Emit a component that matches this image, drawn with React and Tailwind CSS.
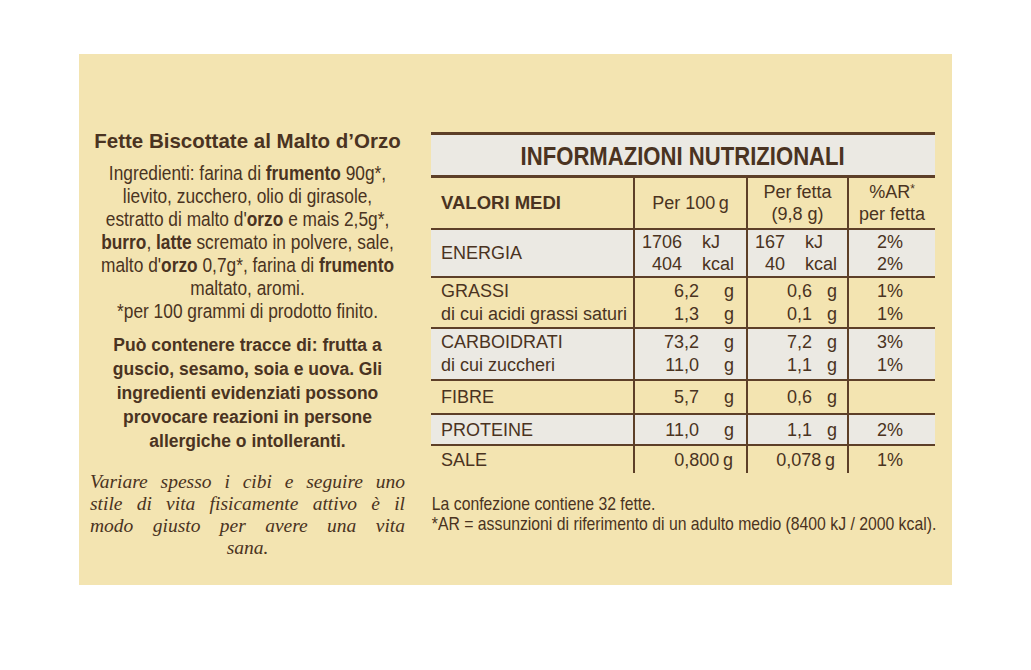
import React from "react";

const SANS = "[font-family:'Liberation_Sans',Arial,sans-serif]";
const SERIF = "[font-family:'Liberation_Serif',serif]";
const ROW = "grid grid-cols-[202px_113px_101px_88px]";
const VL = "border-l-2 border-[#5d3f28]";

function HLine({ thick }) {
  return <div className={(thick ? "h-[3px]" : "h-[2px]") + " bg-[#5d3f28]"} />;
}

function Pair({ rows, nw, uml, uw, right }) {
  return (
    <div className="flex flex-col">
      {rows.map((r, i) => (
        <div key={i} className="flex">
          <span className={"text-right " + nw}>{r[0]}</span>
          <span className={(right ? "text-right " : "") + uml + " " + uw}>{r[1]}</span>
        </div>
      ))}
    </div>
  );
}

function GCol2({ vals }) {
  return (
    <div className={VL + " flex items-center"}>
      <Pair rows={vals.map((v) => [v, "g"])} nw="w-[64px]" uml="" uw="w-[35px]" right />
    </div>
  );
}
function GCol3({ vals }) {
  return (
    <div className={VL + " flex items-center"}>
      <Pair rows={vals.map((v) => [v, "g"])} nw="w-[64px]" uml="" uw="w-[25px]" right />
    </div>
  );
}
function Pct({ vals }) {
  return (
    <div className={VL + " flex flex-col justify-center items-center pr-[4px]"}>
      {vals.map((v, i) => (
        <div key={i}>{v}</div>
      ))}
    </div>
  );
}

export default function App() {
  return (
    <div className={"w-[1031px] h-[670px] bg-white pl-[79px] pt-[54px] overflow-hidden " + SANS}>
      <div className="w-[873px] h-[531px] bg-[#f3e4b1] flex items-start text-[#4a3321]">
        {/* Left column */}
        <div className="ml-[11px] mt-[75px] w-[315px] text-center">
          <div className="font-bold text-[20.5px] leading-[24px] whitespace-nowrap">
            Fette Biscottate al Malto d’Orzo
          </div>
          <div className="mt-[7.5px] -mx-[45px] w-[405px] text-[20.5px] leading-[23px] whitespace-nowrap scale-x-[0.845]">
            <div>Ingredienti: farina di <b>frumento</b> 90g*,</div>
            <div>lievito, zucchero, olio di girasole,</div>
            <div>estratto di malto d'<b>orzo</b> e mais 2,5g*,</div>
            <div><b>burro</b>, <b>latte</b> scremato in polvere, sale,</div>
            <div>malto d'<b>orzo</b> 0,7g*, farina di <b>frumento</b></div>
            <div>maltato, aromi.</div>
            <div>*per 100 grammi di prodotto finito.</div>
          </div>
          <div className="mt-[11.5px] font-bold text-[17.5px] leading-[24px] whitespace-nowrap">
            <div>Può contenere tracce di: frutta a</div>
            <div>guscio, sesamo, soia e uova. Gli</div>
            <div>ingredienti evidenziati possono</div>
            <div>provocare reazioni in persone</div>
            <div>allergiche o intolleranti.</div>
          </div>
          <div className={"mt-[18px] italic text-[19.5px] leading-[22px] " + SERIF}>
            <div className="text-justify [text-align-last:justify]">Variare spesso i cibi e seguire uno</div>
            <div className="text-justify [text-align-last:justify]">stile di vita fisicamente attivo è il</div>
            <div className="text-justify [text-align-last:justify]">modo giusto per avere una vita</div>
            <div className="text-center">sana.</div>
          </div>
        </div>

        {/* Right column */}
        <div className="ml-[26px] mt-[78px] w-[504px]">
          <HLine thick />
          <div className="h-[40px] bg-[#ebe9e3] flex items-center justify-center pt-[2px] font-bold text-[26px] whitespace-nowrap">
            <span className="scale-x-[0.85]">INFORMAZIONI NUTRIZIONALI</span>
          </div>
          <HLine thick />
          <div className="text-[18px] leading-[22px]">
            {/* header */}
            <div className={ROW + " h-[50px]"}>
              <div className="flex items-center pl-[10px] font-bold text-[18.5px]">VALORI MEDI</div>
              <div className={VL + " flex items-center justify-center"}>Per 100&#8201;g</div>
              <div className={VL + " flex flex-col items-center justify-center"}>
                <div>Per fetta</div>
                <div>(9,8 g)</div>
              </div>
              <div className={VL + " flex flex-col items-center justify-center"}>
                <div>%AR<sup className="text-[12px] -top-[5px]">*</sup></div>
                <div>per fetta</div>
              </div>
            </div>
            <HLine />
            {/* energia */}
            <div className={ROW + " h-[46px] bg-[#ebe9e3]"}>
              <div className="flex items-center pl-[10px]">ENERGIA</div>
              <div className={VL + " flex items-center"}>
                <Pair rows={[["1706", "kJ"], ["404", "kcal"]]} nw="w-[47px]" uml="ml-[20px]" uw="" />
              </div>
              <div className={VL + " flex items-center"}>
                <Pair rows={[["167", "kJ"], ["40", "kcal"]]} nw="w-[37px]" uml="ml-[20px]" uw="" />
              </div>
              <Pct vals={["2%", "2%"]} />
            </div>
            <HLine />
            {/* grassi */}
            <div className={ROW + " h-[49px] leading-[23px]"}>
              <div className="flex flex-col justify-center pl-[10px] whitespace-nowrap">
                <div>GRASSI</div>
                <div>di cui acidi grassi saturi</div>
              </div>
              <GCol2 vals={["6,2", "1,3"]} />
              <GCol3 vals={["0,6", "0,1"]} />
              <Pct vals={["1%", "1%"]} />
            </div>
            <HLine />
            {/* carboidrati */}
            <div className={ROW + " h-[50px] leading-[23px] bg-[#ebe9e3]"}>
              <div className="flex flex-col justify-center pl-[10px]">
                <div>CARBOIDRATI</div>
                <div>di cui zuccheri</div>
              </div>
              <GCol2 vals={["73,2", "11,0"]} />
              <GCol3 vals={["7,2", "1,1"]} />
              <Pct vals={["3%", "1%"]} />
            </div>
            <HLine />
            {/* fibre */}
            <div className={ROW + " h-[32px]"}>
              <div className="flex items-center pl-[10px]">FIBRE</div>
              <GCol2 vals={["5,7"]} />
              <GCol3 vals={["0,6"]} />
              <div className={VL} />
            </div>
            <HLine />
            {/* proteine */}
            <div className={ROW + " h-[29px] bg-[#ebe9e3]"}>
              <div className="flex items-center pl-[10px]">PROTEINE</div>
              <GCol2 vals={["11,0"]} />
              <GCol3 vals={["1,1"]} />
              <Pct vals={["2%"]} />
            </div>
            <HLine />
            {/* sale */}
            <div className={ROW + " h-[27px]"}>
              <div className="flex items-center pl-[10px]">SALE</div>
              <div className={VL + " flex items-center justify-end pr-[13px]"}>0,800&#8201;g</div>
              <div className={VL + " flex items-center justify-end pr-[12px]"}>0,078&#8201;g</div>
              <Pct vals={["1%"]} />
            </div>
          </div>
          <div className="mt-[21px] w-[504px] text-[19px] leading-[20px] whitespace-nowrap pl-[1px] origin-left scale-x-[0.83]">
            <div>La confezione contiene 32 fette.</div>
            <div>*AR = assunzioni di riferimento di un adulto medio (8400 kJ / 2000 kcal).</div>
          </div>
        </div>
      </div>
    </div>
  );
}
